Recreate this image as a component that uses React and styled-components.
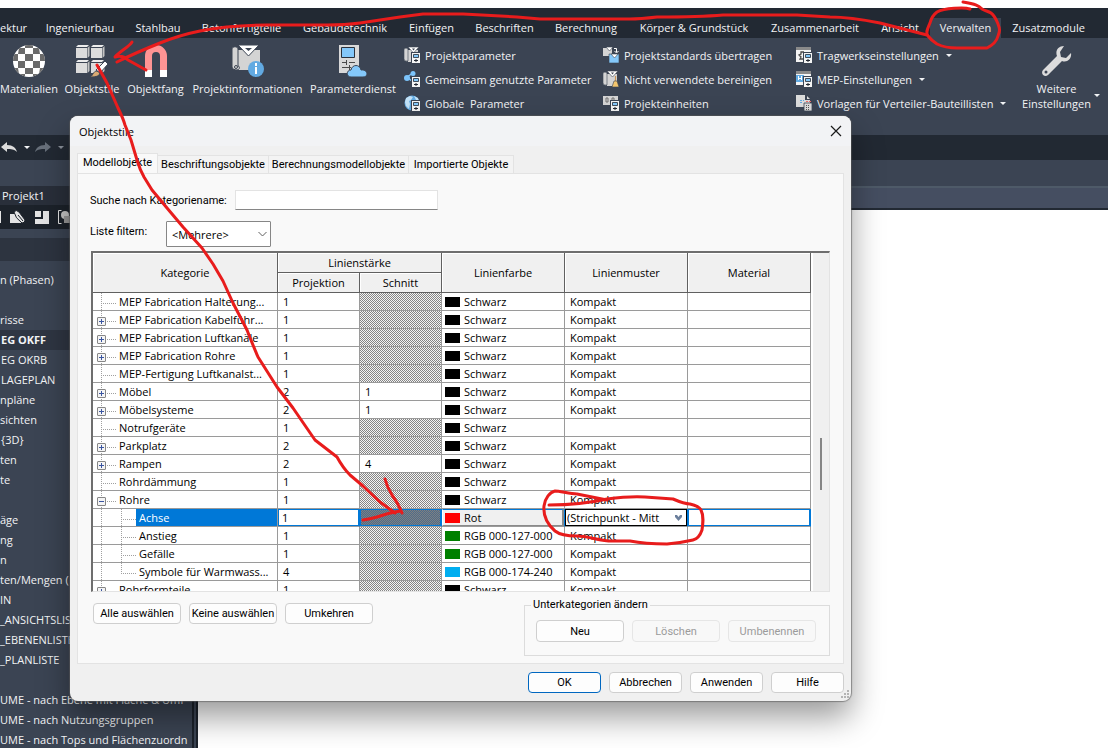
import React from 'react';
import styled, { createGlobalStyle, css } from 'styled-components';

const color = {
  bar: '#222933',
  ribbon: '#3b4453',
  ribbonText: '#f2f3f5',
  divider: '#4c5767',
  blue: '#0078d7',
  sky: '#7cc4fb',
  pen: '#e81c1c',
  dialog: '#f0f0f0',
  page: '#f9f9f9',
  light: '#e3e3e3',
  grid: '#9a9a9a',
  headGrid: '#606060',
};

const uiFont = '"Open Sans", "Noto Sans", sans-serif';
const dialogFont = 'Roboto, "Noto Sans", sans-serif';

const GlobalStyle = createGlobalStyle`
  * {
    box-sizing: border-box;
  }
  body {
    margin: 0;
    background: white;
    font-family: ${uiFont};
    font-size: 11px;
  }
  button, input, select {
    font-family: inherit;
    font-size: inherit;
    color: inherit;
  }
`;

const Screen = styled.div`
  position: relative;
  display: flex;
  flex-direction: column;
  height: 100vh;
  padding-top: 8px;
  overflow: hidden;
`;

/* ---------- ribbon ---------- */

const plainButton = css`
  border: 0;
  padding: 0;
  background: none;
  color: ${color.ribbonText};
  white-space: nowrap;
`;

const TabBar = styled.nav`
  display: flex;
  align-items: flex-end;
  flex-shrink: 0;
  height: 30px;
  overflow: hidden;
  background: ${color.bar};
`;

const RibbonTab = styled.button`
  ${plainButton};
  flex: 0 0 ${({ $width }) => $width}px;
  height: 20px;
  line-height: 20px;
  background: ${({ $active }) => ($active ? color.ribbon : 'none')};
  &:first-child {
    text-align: left;
  }
`;

const Ribbon = styled.div`
  display: flex;
  flex-shrink: 0;
  height: 97px;
  padding-top: 5px;
  overflow: hidden;
  background: ${color.ribbon};
`;

const LargeTools = styled.div`
  display: flex;
  align-items: flex-start;
  gap: 6px;
  margin-right: 8px;
`;

const LargeTool = styled.button`
  ${plainButton};
  display: flex;
  flex-direction: column;
  align-items: center;
  width: ${({ $width }) => $width}px;
  padding-top: 2px;
  line-height: 15px;
  svg {
    flex-shrink: 0;
    margin-bottom: 4px;
  }
`;

const ToolColumn = styled.div`
  display: flex;
  flex-direction: column;
  flex: 0 0 ${({ $width }) => $width}px;
`;

const SmallTool = styled.button`
  ${plainButton};
  display: flex;
  align-items: center;
  gap: 5px;
  height: 24px;
  svg {
    flex-shrink: 0;
  }
`;

const Divider = styled.div`
  width: 1px;
  margin-right: 10px;
  background: ${color.divider};
`;

const Caret = styled.i`
  width: 0;
  margin-left: 2px;
  border: 3px solid transparent;
  border-top-color: ${({ $dim }) => ($dim ? '#8b929c' : '#f2f3f5')};
  border-bottom: 0;
`;

const MoreTools = styled.div`
  display: flex;
  align-items: flex-end;
  align-self: flex-start;
  margin-right: 2px;
  > i {
    margin-bottom: 14px;
  }
`;

const QuickBar = styled.div`
  display: flex;
  align-items: center;
  flex-shrink: 0;
  gap: 5px;
  height: 25px;
  padding-left: 1px;
  background: ${color.bar};
`;

const IconButton = styled.button`
  ${plainButton};
  display: flex;
`;

const OptionsBar = styled.div`
  flex-shrink: 0;
  height: 26px;
  background: ${color.ribbon};
`;

/* ---------- workspace ---------- */

const Workspace = styled.div`
  display: flex;
  flex: 1;
  min-height: 0;
`;

const Browser = styled.aside`
  flex: 0 0 198px;
  overflow: hidden;
  border-right: 2px solid #1b212a;
  background: ${color.ribbon};
  color: ${color.ribbonText};
`;

const BrowserTitle = styled.div`
  height: 19px;
  padding-left: 2px;
  line-height: 20px;
  background: #292f3a;
`;

const BrowserTools = styled.div`
  display: flex;
  align-items: center;
  gap: 7px;
  height: 24px;
  background: #1c222a;
`;

const BrowserFilter = styled.div`
  height: 23px;
  margin-top: 9px;
  background: #2d3440;
`;

const BrowserList = styled.ul`
  margin: 0 2px 0 0;
  padding: 9px 0 0;
  border-right: 2px solid #1b212a;
  list-style: none;
`;

const BrowserItem = styled.li`
  height: 20px;
  padding-left: ${({ $indent }) => ($indent ? 1 : 0)}px;
  line-height: 20px;
  white-space: nowrap;
  font-weight: ${({ $current }) => ($current ? 700 : 400)};
  background: ${({ $current }) => ($current ? '#2f3643' : 'none')};
`;

const Canvas = styled.main`
  flex: 1;
  background: white;
`;

const ViewTabs = styled.div`
  height: 24px;
  border-top: 2px solid #4e5a68;
  border-bottom: 2px solid #222933;
  background: #454e61;
`;

/* ---------- dialog ---------- */

const Dialog = styled.section`
  position: absolute;
  top: 116px;
  left: 70px;
  width: 781px;
  padding: 0 7px 8px;
  border-radius: 8px;
  background: ${color.dialog};
  color: black;
  font-family: ${dialogFont};
  box-shadow: 0 0 1px 1px rgba(90, 90, 90, 0.6), 0 16px 32px rgba(0, 0, 0, 0.4);
`;

const TitleBar = styled.header`
  display: flex;
  align-items: center;
  justify-content: space-between;
  height: 30px;
  margin: 0 -7px;
  padding: 0 9px;
  border-radius: 8px 8px 0 0;
  background: #f2f3f5;
`;

const Title = styled.h1`
  margin: 0;
  font-family: ${uiFont};
  font-size: 11px;
  font-weight: 400;
`;

const DialogTabs = styled.div`
  display: flex;
  align-items: flex-end;
  padding-top: 7px;
`;

const DialogTab = styled.button`
  flex: 0 0 ${({ $width }) => $width}px;
  height: ${({ $active }) => ($active ? 20 : 18)}px;
  padding: 0 0 ${({ $active }) => ($active ? 2 : 0)}px;
  border: 1px solid ${color.light};
  border-left-width: ${({ $active }) => ($active ? 1 : 0)}px;
  border-bottom: 0;
  background: ${({ $active }) => ($active ? color.page : '#f3f3f3')};
  white-space: nowrap;
`;

const TabPage = styled.div`
  padding: 16px 13px 7px 13px;
  border: 1px solid ${color.light};
  background: ${color.page};
`;

const Field = styled.div`
  display: flex;
  align-items: center;
  height: ${({ $height }) => $height}px;
  margin: 0 0 ${({ $after }) => $after}px -1px;
`;

const Label = styled.label`
  flex: 0 0 ${({ $width }) => $width}px;
  padding-bottom: ${({ $lift }) => ($lift ? 6 : 0)}px;
  white-space: nowrap;
`;

const SearchBox = styled.input`
  width: 203px;
  height: 20px;
  padding: 0 4px;
  border: 1px solid ${color.light};
  border-bottom-color: #868686;
  background: white;
`;

const SelectWrap = styled.span`
  position: relative;
  display: flex;
  width: ${({ $width }) => $width};
  svg {
    position: absolute;
    top: 50%;
    right: 4px;
    margin-top: -4px;
    pointer-events: none;
  }
`;

const Select = styled.select`
  width: 100%;
  height: 26px;
  padding: 0 5px;
  appearance: none;
  border: 1px solid #868686;
  border-radius: 1px;
  background: white;
  font-family: ${uiFont};
`;

const CellSelect = styled(Select)`
  height: 17px;
  padding: 0 1px;
  border: 1px solid black;
  border-radius: 0;
`;

const ListFrame = styled.div`
  display: flex;
  height: 341px;
  overflow: hidden;
  border: 1px solid ${color.light};
  border-top: 2px solid #6e6e6e;
  border-left: 2px solid #6e6e6e;
  background: white;
`;

const Table = styled.table`
  flex: 1;
  width: 100%;
  height: max-content;
  table-layout: fixed;
  border-collapse: separate;
  border-spacing: 0;
  font-family: ${uiFont};
`;

const HeadCell = styled.th`
  height: 20px;
  padding: 0;
  border-right: 1px solid ${color.headGrid};
  border-bottom: 1px solid ${color.headGrid};
  background: ${color.dialog};
  box-shadow: inset 1px 1px white;
  font-weight: 400;
  line-height: 19px;
`;

const hatch = (a, b) => css`
  background: repeating-conic-gradient(${a} 0 25%, ${b} 0 50%) 0 0 / 2px 2px;
`;

const Cell = styled.td`
  height: 18px;
  padding: 0 0 0 ${({ $flush }) => ($flush ? 0 : 5)}px;
  overflow: hidden;
  border-right: 1px solid ${({ $selected }) => ($selected ? color.blue : color.grid)};
  border-bottom: 1px solid ${color.grid};
  line-height: 17px;
  white-space: nowrap;
  ${({ $off }) => $off && hatch('#858585', '#f4f4f4')};
  ${({ $selected }) => $selected && css`
    box-shadow: inset 0 0 0 1px ${color.blue};
  `};
  ${({ $selected, $off }) => $selected && $off && hatch('#808080', '#4c6c8c')};
`;

const TreeCell = styled.div`
  display: flex;
  height: 17px;
`;

const dots = (direction) => `repeating-linear-gradient(${direction}, #a0a0a0 0 1px, transparent 1px 2px)`;

const Rail = styled.span`
  display: flex;
  flex: 0 0 20px;
  background: ${dots('to bottom')} 8px 0 / 1px ${({ $half }) => ($half ? '10px' : '100%')} no-repeat;
`;

const BranchRail = styled(Rail)`
  flex-basis: 23px;
  background:
    ${dots('to bottom')} 8px 0 / 1px ${({ $half }) => ($half ? '10px' : '100%')} no-repeat,
    ${dots('to right')} 8px 10px / 15px 1px no-repeat;
`;

const Expander = styled.button`
  width: 9px;
  height: 9px;
  margin: 6px 0 0 4px;
  padding: 0;
  border: 1px solid #868686;
  border-radius: 1px;
  background:
    linear-gradient(#3a55a0, #3a55a0) 1px 3px / 5px 1px no-repeat,
    ${({ $open }) => !$open && 'linear-gradient(#3a55a0, #3a55a0) 3px 1px / 1px 5px no-repeat,'}
    #f4f4f4;
`;

const TreeText = styled.span`
  flex: 1;
  min-width: 0;
  padding-left: 3px;
  overflow: hidden;
  color: ${({ $selected }) => ($selected ? 'white' : 'black')};
  background: ${({ $selected }) => ($selected ? color.blue : 'none')};
`;

const CellInput = styled.input`
  display: block;
  width: 100%;
  height: 17px;
  padding: 0 3px;
  border: 1px solid ${color.blue};
  background: white;
`;

const Swatch = styled.i`
  flex: 0 0 15px;
  height: 10px;
  margin-right: 4px;
  background: ${({ $fill }) => $fill};
`;

const ColorValue = styled.span`
  display: flex;
  align-items: center;
  height: 17px;
  padding-left: 3px;
`;

const ColorButton = styled.button`
  display: flex;
  align-items: center;
  width: 100%;
  height: 17px;
  padding: 0 0 0 2px;
  border: 1px solid #fff;
  border-top-color: ${color.blue};
  border-right: 2px solid #8a8a8a;
  border-bottom-color: #8a8a8a;
  background: ${color.dialog};
`;

const ScrollTrack = styled.div`
  flex: 0 0 16px;
  padding: 185px 0 0 7px;
  margin-left: 2px;
  background: ${color.dialog};
`;

const ScrollThumb = styled.div`
  width: 2px;
  height: 52px;
  background: #868686;
`;

const PageFooter = styled.div`
  display: flex;
  align-items: flex-start;
  justify-content: space-between;
  padding: 6px 0 0 2px;
`;

const ButtonRow = styled.div`
  display: flex;
  justify-content: flex-end;
  gap: 8px;
  padding-top: ${({ $top }) => $top}px;
`;

const Button = styled.button`
  width: ${({ $wide }) => ($wide ? 88 : 73)}px;
  height: ${({ $tall }) => ($tall ? 22 : 21)}px;
  padding: 0;
  border: 1px solid ${({ $primary }) => ($primary ? '#0067c0' : '#cfcfcf')};
  border-radius: 4px;
  background: #fdfdfd;
  white-space: nowrap;
  &:disabled {
    border-color: #e6e6e6;
    background: #f8f8f8;
    color: #9b9b9b;
  }
`;

const Group = styled.fieldset`
  display: flex;
  gap: 8px;
  margin: 0;
  padding: 8px 13px 13px 11px;
  border: 1px solid #dcdcdc;
`;

const Legend = styled.legend`
  margin-left: -5px;
  padding: 0 2px;
  line-height: 14px;
`;

const Grip = styled.svg`
  position: absolute;
  right: 2px;
  bottom: 3px;
`;

const Markup = styled.svg`
  position: absolute;
  top: 0;
  left: 0;
  pointer-events: none;
`;

/* ---------- icons ---------- */

const SphereIcon = () => (
  <svg width="32" height="32" viewBox="0 0 32 32">
    <clipPath id="ball"><circle cx="16" cy="16" r="16" /></clipPath>
    <g clipPath="url(#ball)">
      <path fill="#fff" d="M0 0h32v32H0z" />
      <path
        fill="#6a6a6a"
        d="M12 0h8v3h-8zM6 3h6v6H5zM20 3h6l1 6h-7zM12 9h8v7h-8zM0 9h5v7H0zM27 9h5v7h-5zM5 16h7v7H5zM20 16h7v7h-7zM12 23h8v6h-8zM1 23h4l1 6H1zM27 23h4v6h-5zM6 29h6v3H6zM20 29h6v3h-6z"
      />
    </g>
  </svg>
);

const StylesIcon = () => (
  <svg width="32" height="32" viewBox="0 0 32 32">
    {[[0, 0], [15, 0], [0, 15], [15, 15]].map(([x, y]) => (
      <g key={`${x}-${y}`} transform={`translate(${x} ${y})`}>
        <path fill="#dcdcdc" d="M0 3h11v10H0z" />
        <path fill="#ececec" d="M0 2l2-2h11l-2 2z" />
        <path fill="#c4c4c4" d="M11.500 3L13.500 1v10l-2 2z" />
      </g>
    ))}
    <path fill="#fff" stroke="#3b4453" d="M20 25l9-9 3 3-8 9z" />
    <path fill="#d9ab74" stroke="#3b4453" d="M14 32c3-1 3-6 7-6l3 2c-1 4-6 4-10 4z" />
  </svg>
);

const MagnetIcon = () => (
  <svg width="32" height="32" viewBox="0 0 32 32">
    <path fill="none" stroke="#ff9494" strokeWidth="7" d="M8.500 25V11a7.500 7.500 0 0 1 15 0v14" />
    <path fill="#fff" d="M5 25h7v7H5zM20 25h7v7h-7z" />
  </svg>
);

const ProjectIcon = () => (
  <svg width="32" height="32" viewBox="0 0 32 32">
    <path fill="#d4d4d4" d="M6 5h22v20H6z" />
    <path fill="#d4d4d4" stroke="#3b4453" d="M0 22V4c0-3 6-3 6 0v17c2 0 2 4-1 4-2 0-5-1-5-3z" />
    <circle cx="4" cy="22" r="1.500" fill="none" stroke="#3b4453" />
    <path fill="#fff" stroke="#3b4453" d="M6 0h21L16.500 11z" />
    <path fill="#3b4453" d="M13 3h7l-3.500 3z" />
    <circle cx="24" cy="24" r="8" fill="#62aae2" />
    <path fill="#fff" d="M23 18h2v3h-2zM23 22h2v7h-2z" />
  </svg>
);

const ServiceIcon = () => (
  <svg width="32" height="32" viewBox="0 0 32 32">
    <path fill="#d9d9d9" d="M2 0h20v28H2z" />
    <path fill="#84c8fa" stroke="#2b323d" d="M4.500 2.500h13v10h-13z" />
    <path stroke="#4a4a4a" d="M5 17.500h5M12 17.500h6M9.500 15v5M5 22.500h9M12.500 20v5" />
    <path fill="#84c8fa" stroke="#3b4453" d="M14 32c-5 0-5-7 0-7 1-6 9-6 10 0 7-1 8 7 2 7z" />
  </svg>
);

const WrenchIcon = () => (
  <svg width="32" height="32" viewBox="0 0 32 32">
    <path
      fill="#dcdcdc"
      d="M23 1c-6 0-9 5-7 10L2 25c-3 4 2 8 5 5l14-14c5 2 10-2 9-8l-5 5-5-1-1-5z"
    />
    <circle cx="5" cy="27" r="1.500" fill="#3b4453" />
  </svg>
);

const Scroll = () => (
  <>
    <path fill="#d4d4d4" d="M4 3h10v12H4z" />
    <path fill="#d4d4d4" stroke="#3b4453" strokeWidth=".6" d="M0 12V2q2-2 4 0v12q-4 1-4-2z" />
    <path fill="#fff" stroke="#3b4453" strokeWidth=".6" d="M4 0h11L9.500 6z" />
    <path fill="#3b4453" d="M8 1.500h3l-1.500 2z" />
  </>
);

const Gadget = () => (
  <g>
    <path fill="#3b4453" d="M7 5h9v11H7z" />
    <path fill="#f4f4f4" d="M8 6h8v10H8z" />
    <path fill="#84c8fa" stroke="#222933" strokeWidth=".8" d="M9.500 7.500h5v3h-5z" />
    <path stroke="#222933" d="M10 13.500h4M12 12v3" />
  </g>
);

const drawings = {
  params: <><Scroll /><Gadget /></>,
  shared: (
    <>
      <path stroke="#7cc4fb" strokeWidth="1.500" d="M9 2L3 6l6 5" fill="none" />
      <circle cx="9" cy="2.500" r="2.500" fill="#7cc4fb" />
      <circle cx="3" cy="7" r="3" fill="#7cc4fb" />
      <Gadget />
    </>
  ),
  global: (
    <>
      <circle cx="8" cy="8" r="7.500" fill="#62aae2" />
      <path fill="#c3e2f7" d="M2 3l4-2 3 1-2 3-2 1 1 3-1 5-3-3-1-4zM10 1l4 2 1 3-3-1z" />
      <Gadget />
    </>
  ),
  transfer: (
    <>
      <path fill="#d4d4d4" d="M0 1h9v8H0z" />
      <path fill="#fff" stroke="#3b4453" strokeWidth=".6" d="M3 0h7L6.500 4z" />
      <path stroke="#fff" fill="none" d="M11 1.500h2.500V5M11.500 4l2 2 2-2" />
      <path fill="#84c8fa" stroke="#3b4453" strokeWidth=".6" d="M6 7h10v9H6z" />
      <path fill="#fff" stroke="#3b4453" strokeWidth=".6" d="M8 7h7l-3.500 4z" />
    </>
  ),
  purge: (
    <>
      <Scroll />
      <path stroke="#c99455" strokeWidth="1.200" d="M12.500 5v6" />
      <path fill="#f2c56e" stroke="#3b4453" strokeWidth=".6" d="M11 10h3l2 6H9z" />
    </>
  ),
  units: (
    <>
      <path fill="#d4d4d4" d="M0 1h15v9H0z" />
      <path fill="none" stroke="#707070" d="M3 3h2v4H3zM9 3h2v4H9z" />
      <Gadget />
    </>
  ),
  structure: (
    <>
      <path fill="#f4f4f4" d="M0 0h15v15H0z" />
      <path fill="#8a8a8a" d="M0 0h15v3H0z" />
      <path fill="none" stroke="#4a4a4a" strokeWidth="1.300" d="M8 5H5v2L3 8l2 2-1 2h4" />
      <Gadget />
    </>
  ),
  mep: (
    <>
      <path fill="#f4f4f4" d="M0 0h15v14H0z" />
      <path fill="#8a8a8a" d="M0 0h15v3H0z" />
      <path fill="#62aae2" d="M0 4h8v7H0z" />
      <path stroke="#fff" d="M2.500 5v4M5.500 5v4M2 7.500h4" />
      <Gadget />
    </>
  ),
  panel: (
    <>
      <path fill="#dcdcdc" d="M0 0h10l4 4v8H0z" />
      <path fill="#3b4453" d="M9 0h2v4h4v1H9z" />
      <path stroke="#62aae2" strokeDasharray="2 1" d="M4 5.500h4M4 7.500h3" />
      <path stroke="#ef6a6a" strokeDasharray="2 1" d="M10 6.500h5" />
      <path fill="#dcdcdc" stroke="#3b4453" strokeWidth=".8" d="M8 8h8v8H8z" />
      <path stroke="#555" strokeDasharray="1 1" d="M10 10.500h4M10 12.500h4M10 14.500h4" />
    </>
  ),
};

const SmallIcon = ({ name }) => (
  <svg width="16" height="16" viewBox="0 0 16 16">{drawings[name]}</svg>
);

const ArrowIcon = ({ flip, fill }) => (
  <svg width="16" height="12" viewBox="0 0 16 12">
    <path
      fill={fill}
      transform={flip ? 'matrix(-1 0 0 1 16 0)' : undefined}
      d="M0 5l6-5v3c6 0 9 3 10 7-3-3-6-3-10-3v3z"
    />
  </svg>
);

const Chevron = ({ bold }) => (
  <svg width="9" height="8" viewBox="0 0 9 8">
    {bold
      ? <path fill="#6b7f9c" d="M1 1h2l1.500 2L6 1h2v2L4.500 7 1 3z" />
      : <path fill="none" stroke="#606060" d="M.5 2l4 4 4-4" />}
  </svg>
);

/* ---------- data ---------- */

const ribbonTabs = [
  ['ektur', 35],
  ['Ingenieurbau', 90],
  ['Stahlbau', 66],
  ['Betonfertigteile', 101],
  ['Gebäudetechnik', 106],
  ['Einfügen', 67],
  ['Beschriften', 79],
  ['Berechnung', 84],
  ['Körper & Grundstück', 132],
  ['Zusammenarbeit', 110],
  ['Ansicht', 60],
  ['Verwalten', 71],
  ['Zusatzmodule', 95],
];

const largeTools = [
  ['Materialien', 58, SphereIcon],
  ['Objektstile', 56, StylesIcon],
  ['Objektfang', 59, MagnetIcon],
  ['Projektinformationen', 113, ProjectIcon],
  ['Parameterdienst', 86, ServiceIcon],
];

const parameterTools = [
  ['params', 'Projektparameter'],
  ['shared', 'Gemeinsam genutzte Parameter'],
  ['global', 'Globale\u00a0 Parameter'],
];

const standardTools = [
  ['transfer', 'Projektstandards übertragen'],
  ['purge', 'Nicht verwendete bereinigen'],
  ['units', 'Projekteinheiten'],
];

const settingTools = [
  ['structure', 'Tragwerkseinstellungen'],
  ['mep', 'MEP-Einstellungen'],
  ['panel', 'Vorlagen für Verteiler-Bauteillisten'],
];

const browserItems = [
  'n (Phasen)', '', 'risse', ' EG OKFF', ' EG OKRB', ' LAGEPLAN', 'npläne', 'sichten',
  ' {3D}', 'ten', 'te', '', 'äge', 'ng', 'n', 'ten/Mengen (', 'IN', '_ANSICHTSLISTE',
  '_EBENENLISTE', '_PLANLISTE', '', 'UME - nach Ebene mit Fläche & Umf',
  'UME - nach Nutzungsgruppen', 'UME - nach Tops und Flächenzuordn',
];

const black = ['#000000', 'Schwarz'];
const green = ['#008000', 'RGB 000-127-000'];

const rows = [
  { name: 'MEP Fabrication Halterung...', projection: 1 },
  { name: 'MEP Fabrication Kabelführ...', projection: 1, node: 'closed' },
  { name: 'MEP Fabrication Luftkanäle', projection: 1, node: 'closed' },
  { name: 'MEP Fabrication Rohre', projection: 1, node: 'closed' },
  { name: 'MEP-Fertigung Luftkanalst...', projection: 1 },
  { name: 'Möbel', projection: 2, cut: 1, node: 'closed' },
  { name: 'Möbelsysteme', projection: 2, cut: 1, node: 'closed' },
  { name: 'Notrufgeräte', projection: 1, pattern: '' },
  { name: 'Parkplatz', projection: 2, node: 'closed' },
  { name: 'Rampen', projection: 2, cut: 4, node: 'closed' },
  { name: 'Rohrdämmung', projection: 1 },
  { name: 'Rohre', projection: 1, node: 'open' },
  { name: 'Achse', projection: 1, child: true, selected: true, line: ['#ff0000', 'Rot'] },
  { name: 'Anstieg', projection: 1, child: true, line: green },
  { name: 'Gefälle', projection: 1, child: true, line: green },
  { name: 'Symbole für Warmwass...', projection: 4, child: true, last: true, line: ['#00aef0', 'RGB 000-174-240'] },
  { name: 'Rohrformteile', projection: 1, node: 'closed' },
];

const dialogTabs = [
  ['Modellobjekte', 81],
  ['Beschriftungsobjekte', 111],
  ['Berechnungsmodellobjekte', 140],
  ['Importierte Objekte', 105],
];

/* ---------- parts ---------- */

const ToolList = ({ tools, width, menu }) => (
  <ToolColumn $width={width}>
    {tools.map(([icon, text]) => (
      <SmallTool key={text} type="button">
        <SmallIcon name={icon} />
        {text}
        {menu && <Caret />}
      </SmallTool>
    ))}
  </ToolColumn>
);

const Row = ({ row }) => {
  const { name, projection, cut, node, child, last, selected, pattern = 'Kompakt', line = black } = row;
  return (
    <tr>
      <Cell $flush>
        <TreeCell>
          {child && <Rail />}
          {node ? (
            <BranchRail>
              <Expander type="button" $open={node === 'open'} aria-label={name} />
            </BranchRail>
          ) : <BranchRail $half={last} />}
          <TreeText $selected={selected}>{name}</TreeText>
        </TreeCell>
      </Cell>
      <Cell $flush={selected} $selected={selected}>
        {selected ? <CellInput aria-label="Projektion" defaultValue={projection} /> : projection}
      </Cell>
      <Cell $off={!cut} $selected={selected}>{cut}</Cell>
      <Cell $flush $selected={selected}>
        {selected ? (
          <ColorButton type="button">
            <Swatch $fill={line[0]} />
            {line[1]}
          </ColorButton>
        ) : (
          <ColorValue>
            <Swatch $fill={line[0]} />
            {line[1]}
          </ColorValue>
        )}
      </Cell>
      <Cell $flush={selected} $selected={selected}>
        {selected ? (
          <SelectWrap $width="100%">
            <CellSelect aria-label="Linienmuster">
              <option>(Strichpunkt - Mitt</option>
            </CellSelect>
            <Chevron bold />
          </SelectWrap>
        ) : pattern}
      </Cell>
      <Cell $selected={selected} />
    </tr>
  );
};

const StyleTable = () => (
  <ListFrame>
    <Table>
      <colgroup>
        <col style={{ width: 185 }} />
        <col style={{ width: 82 }} />
        <col style={{ width: 82 }} />
        <col />
        <col />
        <col />
      </colgroup>
      <thead>
        <tr>
          <HeadCell rowSpan={2}>Kategorie</HeadCell>
          <HeadCell colSpan={2}>Linienstärke</HeadCell>
          <HeadCell rowSpan={2}>Linienfarbe</HeadCell>
          <HeadCell rowSpan={2}>Linienmuster</HeadCell>
          <HeadCell rowSpan={2}>Material</HeadCell>
        </tr>
        <tr>
          <HeadCell>Projektion</HeadCell>
          <HeadCell>Schnitt</HeadCell>
        </tr>
      </thead>
      <tbody>
        {rows.map((row) => <Row key={row.name} row={row} />)}
      </tbody>
    </Table>
    <ScrollTrack><ScrollThumb /></ScrollTrack>
  </ListFrame>
);

const ObjectStyles = () => (
  <Dialog role="dialog" aria-labelledby="dialog-title">
    <TitleBar>
      <Title id="dialog-title">Objektstile</Title>
      <IconButton type="button" aria-label="Schließen">
        <svg width="12" height="12" viewBox="0 0 12 12">
          <path stroke="#1a1a1a" strokeWidth="1.200" d="M1 1l10 10M11 1L1 11" />
        </svg>
      </IconButton>
    </TitleBar>
    <DialogTabs role="tablist">
      {dialogTabs.map(([text, width], i) => (
        <DialogTab key={text} type="button" role="tab" aria-selected={i === 0} $active={i === 0} $width={width}>
          {text}
        </DialogTab>
      ))}
    </DialogTabs>
    <TabPage>
      <Field $height={20} $after={11}>
        <Label htmlFor="search" $width={145}>Suche nach Kategoriename:</Label>
        <SearchBox id="search" type="text" />
      </Field>
      <Field $height={26} $after={4}>
        <Label htmlFor="filter" $width={76} $lift>Liste filtern:</Label>
        <SelectWrap $width="105px">
          <Select id="filter">
            <option>&lt;Mehrere&gt;</option>
          </Select>
          <Chevron />
        </SelectWrap>
      </Field>
      <StyleTable />
      <PageFooter>
        <ButtonRow $top={5}>
          <Button type="button" $wide>Alle auswählen</Button>
          <Button type="button" $wide>Keine auswählen</Button>
          <Button type="button" $wide>Umkehren</Button>
        </ButtonRow>
        <Group>
          <Legend>Unterkategorien ändern</Legend>
          <Button type="button" $wide $tall>Neu</Button>
          <Button type="button" $wide $tall disabled>Löschen</Button>
          <Button type="button" $wide $tall disabled>Umbenennen</Button>
        </Group>
      </PageFooter>
    </TabPage>
    <ButtonRow $top={8}>
      <Button type="button" $primary>OK</Button>
      <Button type="button">Abbrechen</Button>
      <Button type="button">Anwenden</Button>
      <Button type="button">Hilfe</Button>
    </ButtonRow>
    <Grip width="8" height="8" viewBox="0 0 8 8">
      <path fill="#b4b4b4" d="M6 0h2v2H6zM3 3h2v2H3zM6 3h2v2H6zM0 6h2v2H0zM3 6h2v2H3zM6 6h2v2H6z" />
    </Grip>
  </Dialog>
);

const strokes = [
  // ring round the active ribbon tab
  'M970 9C965 7 944 8 937 12C933 15 931 19 930 23C928 28 925 33 928 36C931 40 934 42 937 44C943 47 950 48 957 48L987 48C993 45 997 40 998 36C1000 31 1000 29 998 24C996 19 995 16 991 13C988 11 985 11 982 9C979 6 976 4 963 2',
  // from the tab to the tool
  'M927 35L880 23Q850 17 830 17L797 15H723Q700 17 657 17Q640 19 630 19H540L517 17L463 14H423L400 17L360 23Q345 25 327 25H267Q230 25 200 31Q180 35 160 43Q135 53 117 62',
  'M132 42C129 47 119 52 115 57C121 55 125 57 128 60L146 70',
  // from the tool to the list row
  'M97 65L107 83L118 108Q123 118 125 125L131 140L137 160Q140 170 144 177L152 190L167 208L183 227L202 248L213 264L223 281L233 303L247 330Q252 343 258 357L277 387L293 408L315 440L337 457Q343 468 350 475L363 486L380 502L395 513',
  'M385 479Q387 487 392 495Q398 503 402 513M363 520Q370 519 377 517Q388 513 400 511',
  // ring round the line pattern
  'M549 505C565 505 585 504 607 499Q630 496 645 497L673 499C680 502 685 504 690 504Q699 506 701 510C704 516 703 523 702 530C700 536 697 539 693 540Q680 543 667 544Q645 544 630 541H612C600 541 588 536 577 536C568 536 560 535 555 531C547 524 543 516 544 506C545 498 550 492 555 491C560 491 570 494 577 494L607 500',
];

export default () => (
  <Screen>
    <GlobalStyle />
    <TabBar>
      {ribbonTabs.map(([text, width]) => (
        <RibbonTab key={text} type="button" $width={width} $active={text === 'Verwalten'}>
          {text}
        </RibbonTab>
      ))}
    </TabBar>
    <Ribbon>
      <LargeTools>
        {largeTools.map(([text, width, Icon]) => (
          <LargeTool key={text} type="button" $width={width}>
            <Icon />
            {text}
          </LargeTool>
        ))}
      </LargeTools>
      <ToolList tools={parameterTools} width={199} />
      <ToolList tools={standardTools} width={183} />
      <Divider />
      <ToolList tools={settingTools} width={225} menu />
      <MoreTools>
        <LargeTool type="button" $width={71}>
          <WrenchIcon />
          <span>Weitere</span>
          <span>Einstellungen</span>
        </LargeTool>
        <Caret />
      </MoreTools>
      <Divider />
    </Ribbon>
    <QuickBar>
      <IconButton type="button" aria-label="Rückgängig"><ArrowIcon fill="#dcdcdc" /></IconButton>
      <Caret />
      <IconButton type="button" aria-label="Wiederholen"><ArrowIcon flip fill="#68707b" /></IconButton>
      <Caret $dim />
    </QuickBar>
    <OptionsBar />
    <Workspace>
      <Browser>
        <BrowserTitle>Projekt1</BrowserTitle>
        <BrowserTools>
          <svg width="72" height="16" viewBox="0 0 72 16">
            <path fill="#e4e4e4" d="M0 2h1v12H0z" />
            <path fill="#e4e4e4" d="M10 5h6l8 9H10z" />
            <path fill="#e4e4e4" stroke="#1c222a" d="M14 3q2-3 5 0l6 8q0 3-3 3-7-5-8-11z" />
            <path fill="none" stroke="#1c222a" d="M18 6l5 6" />
            <path fill="#e4e4e4" d="M35 2h6v6h-6zM43 2h6v13H35v-5h8z" />
            <path fill="none" stroke="#e4e4e4" d="M61.500 1.500h-3v13h3" />
            <circle cx="65" cy="6" r="4" fill="#c8c8c8" />
            <path fill="#9a9a9a" d="M64 7h8v7h-8z" />
          </svg>
        </BrowserTools>
        <BrowserFilter />
        <BrowserList>
          {browserItems.map((text, i) => (
            <BrowserItem key={i} $indent={text.startsWith(' ')} $current={text === ' EG OKFF'}>
              {text}
            </BrowserItem>
          ))}
        </BrowserList>
      </Browser>
      <Canvas><ViewTabs /></Canvas>
    </Workspace>
    <ObjectStyles />
    <Markup width="1108" height="748" viewBox="0 0 1108 748" aria-hidden="true">
      {strokes.map((d) => (
        <path key={d} d={d} fill="none" stroke={color.pen} strokeWidth="3" strokeLinecap="round" strokeLinejoin="round" />
      ))}
    </Markup>
  </Screen>
);
